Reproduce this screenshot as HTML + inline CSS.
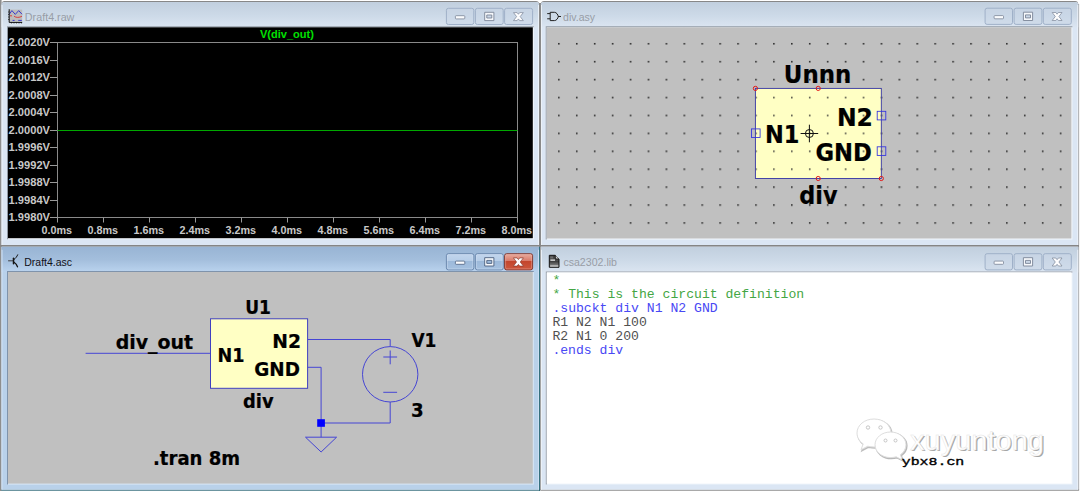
<!DOCTYPE html>
<html><head><meta charset="utf-8"><title>LTspice</title>
<style>
html,body{margin:0;padding:0;background:#fff;}
body{width:1080px;height:492px;overflow:hidden;}
svg{display:block;}
.ui{font-family:"Liberation Sans",sans-serif;}
.ab{font-family:"Liberation Sans",sans-serif;font-weight:bold;}
.tb{font-family:"DejaVu Sans Condensed","DejaVu Sans","Liberation Sans",sans-serif;font-weight:bold;fill:#000;}
.mono{font-family:"Liberation Mono",monospace;}
</style></head><body>
<svg width="1080" height="492" viewBox="0 0 1080 492">
<defs>
<linearGradient id="gi" x1="0" y1="0" x2="0" y2="1"><stop offset="0" stop-color="#c1cfde"/><stop offset="0.55" stop-color="#cddae8"/><stop offset="1" stop-color="#dbe5f1"/></linearGradient>
<linearGradient id="ga" x1="0" y1="0" x2="0" y2="1"><stop offset="0" stop-color="#98b4d4"/><stop offset="0.5" stop-color="#a3bedc"/><stop offset="1" stop-color="#bad3ee"/></linearGradient>
<linearGradient id="gdoc" x1="0" y1="0" x2="0" y2="1"><stop offset="0" stop-color="#3a3a3a"/><stop offset="0.4" stop-color="#555"/><stop offset="0.5" stop-color="#3c3c3c"/><stop offset="1" stop-color="#9c9c9c"/></linearGradient>
<linearGradient id="gred" x1="0" y1="0" x2="0" y2="1"><stop offset="0" stop-color="#e9ada0"/><stop offset="0.42" stop-color="#da7d6c"/><stop offset="0.46" stop-color="#c3452c"/><stop offset="1" stop-color="#cc583e"/></linearGradient>
<linearGradient id="gbtn" x1="0" y1="0" x2="0" y2="1"><stop offset="0" stop-color="#c2d6ed"/><stop offset="0.42" stop-color="#b7cee8"/><stop offset="0.46" stop-color="#9cb9da"/><stop offset="1" stop-color="#a6c1e0"/></linearGradient>
<pattern id="dots" x="558.05" y="42.95" width="17.92" height="17.92" patternUnits="userSpaceOnUse"><rect x="0" y="0" width="1.6" height="1.6" fill="#2c2c2c"/></pattern>
<clipPath id="c1"><rect x="8" y="27" width="524.8" height="211"/></clipPath>
</defs>
<rect x="0" y="0" width="1080" height="492" fill="#ffffff"/>
<rect x="0" y="0" width="1.6" height="491" fill="#8e8e8e"/>
<rect x="539" y="3" width="2" height="243" fill="#8a8a8a"/>
<rect x="1078.2" y="4" width="0.9" height="486" fill="#858585"/>
<rect x="539" y="246" width="1.1" height="245" fill="#35707f"/>
<rect x="540.1" y="246" width="0.9" height="244" fill="#9c9c9c"/>
<rect x="1.300" y="489.6" width="538.8" height="1.1" fill="#2e6878"/>
<rect x="540.400" y="489.6" width="538.7" height="1.1" fill="#858585"/>
<rect x="0" y="245" width="1079" height="1.8" fill="#858585"/>

<path d="M1.6 245V4a3 3 0 0 1 3 -3H536a3 3 0 0 1 3 3V245Z" fill="#878787"/>
<path d="M1.6 245V4.6a2.6 2.6 0 0 1 2.6 -2.6H536.4a2.6 2.6 0 0 1 2.600 2.6V245Z" fill="#dbe6f4"/>
<path d="M1.6 27.3V4.6a2.6 2.6 0 0 1 2.6 -2.6H536.4a2.6 2.6 0 0 1 2.600 2.600V27.3Z" fill="url(#gi)"/>
<rect x="1.6" y="5" width="0.9" height="240" fill="#eef3fa"/>
<rect x="538.1" y="5" width="0.9" height="240" fill="#eef3fa"/>
<rect x="7" y="26.3" width="526.8" height="212.89999999999998" fill="#f3f7fc"/>
<path d="M7 239.2V26.3H533.8V27.3H8V239.2Z" fill="#8f98a3"/>
<rect x="8" y="27.3" width="524.8" height="210.89999999999998" fill="#000000"/>
<rect x="446.4" y="8.3" width="27.399999999999977" height="16.2" rx="2" fill="#c9d6e6" fill-opacity="0.55" stroke="#9fb0c8" stroke-width="1"/>
<rect x="475.4" y="8.3" width="27.80000000000001" height="16.2" rx="2" fill="#c9d6e6" fill-opacity="0.55" stroke="#9fb0c8" stroke-width="1"/>
<rect x="504.59999999999997" y="8.3" width="28.000000000000057" height="16.2" rx="2" fill="#c9d6e6" fill-opacity="0.55" stroke="#9fb0c8" stroke-width="1"/>
<rect x="455.4" y="15.700000000000001" width="9.4" height="3.2" rx="0.8" fill="#fafbfd" stroke="#7a8496" stroke-width="0.8"/>
<path fill-rule="evenodd" d="M484.69999999999993 12.3h9.2v8.3h-9.200z M486.79999999999995 15.0h5v3h-5z" fill="#f6f8fb" stroke="#7a8496" stroke-width="0.9" stroke-linejoin="round"/>
<path d="M513.50 12.60L517.10 12.60L518.40 14.28L519.70 12.60L523.30 12.60L520.20 16.60L523.30 20.60L519.70 20.60L518.40 18.92L517.10 20.60L513.50 20.60L516.60 16.60Z" fill="#fdfdfe" stroke="#7a8496" stroke-width="0.7" stroke-linejoin="round"/>
<g><rect x="9.4" y="9.6" width="12.8" height="12" fill="#bcbcbc"/><path d="M9.3 14.2l2.6-3.6 3.4 3.8 3.4-3.8 3.3 3.6" fill="none" stroke="#3a3acc" stroke-width="1"/><path d="M10 15.8h2 M14 16.2c2 1.6 5.4 1.6 8 0" fill="none" stroke="#d94040" stroke-width="1"/><path d="M12.6 20.4h2 M18.2 20.4h3.6" stroke="#3a3acc" stroke-width="1"/><path d="M9.2 9.2v13.2h13" fill="none" stroke="#111" stroke-width="1"/><path d="M8.2 12h1 M8.2 14.5h1 M8.2 17h1 M8.2 19.500h1 M11.5 22.4v1 M14 22.4v1 M16.5 22.4v1 M19 22.400v1 M21.5 22.4v1" stroke="#111" stroke-width="0.8"/></g>
<text class="ui" x="24.88" y="20.8" font-size="10.2" fill="#989da6" textLength="49.51" lengthAdjust="spacingAndGlyphs">Draft4.raw</text>
<g clip-path="url(#c1)">
<rect x="57.5" y="42.5" width="460" height="175" fill="none" stroke="#8a8a8a" stroke-width="1"/>
<path d="M50 42.5H57.5" stroke="#9a9a9a" stroke-width="1"/>
<text class="ab" x="8.59" y="46.1" font-size="11.5" fill="#c8c8c8" textLength="41.41" lengthAdjust="spacingAndGlyphs">2.0020V</text>
<path d="M50 60.5H57.5" stroke="#9a9a9a" stroke-width="1"/>
<text class="ab" x="8.59" y="63.6" font-size="11.5" fill="#c8c8c8" textLength="41.41" lengthAdjust="spacingAndGlyphs">2.0016V</text>
<path d="M50 77.5H57.5" stroke="#9a9a9a" stroke-width="1"/>
<text class="ab" x="8.59" y="81.1" font-size="11.5" fill="#c8c8c8" textLength="41.41" lengthAdjust="spacingAndGlyphs">2.0012V</text>
<path d="M50 95.5H57.5" stroke="#9a9a9a" stroke-width="1"/>
<text class="ab" x="8.59" y="98.6" font-size="11.5" fill="#c8c8c8" textLength="41.41" lengthAdjust="spacingAndGlyphs">2.0008V</text>
<path d="M50 112.5H57.5" stroke="#9a9a9a" stroke-width="1"/>
<text class="ab" x="8.59" y="116.1" font-size="11.5" fill="#c8c8c8" textLength="41.41" lengthAdjust="spacingAndGlyphs">2.0004V</text>
<path d="M50 130.5H57.5" stroke="#9a9a9a" stroke-width="1"/>
<text class="ab" x="8.59" y="133.6" font-size="11.5" fill="#c8c8c8" textLength="41.41" lengthAdjust="spacingAndGlyphs">2.0000V</text>
<path d="M50 147.5H57.5" stroke="#9a9a9a" stroke-width="1"/>
<text class="ab" x="8.60" y="151.1" font-size="11.5" fill="#c8c8c8" textLength="41.40" lengthAdjust="spacingAndGlyphs">1.9996V</text>
<path d="M50 165.5H57.5" stroke="#9a9a9a" stroke-width="1"/>
<text class="ab" x="8.60" y="168.6" font-size="11.5" fill="#c8c8c8" textLength="41.40" lengthAdjust="spacingAndGlyphs">1.9992V</text>
<path d="M50 182.5H57.5" stroke="#9a9a9a" stroke-width="1"/>
<text class="ab" x="8.60" y="186.1" font-size="11.5" fill="#c8c8c8" textLength="41.40" lengthAdjust="spacingAndGlyphs">1.9988V</text>
<path d="M50 200.5H57.5" stroke="#9a9a9a" stroke-width="1"/>
<text class="ab" x="8.60" y="203.6" font-size="11.5" fill="#c8c8c8" textLength="41.40" lengthAdjust="spacingAndGlyphs">1.9984V</text>
<path d="M50 217.5H57.5" stroke="#9a9a9a" stroke-width="1"/>
<text class="ab" x="8.60" y="221.1" font-size="11.5" fill="#c8c8c8" textLength="41.40" lengthAdjust="spacingAndGlyphs">1.9980V</text>
<path d="M57.5 217.5V222.5" stroke="#9a9a9a" stroke-width="1"/>
<text class="ab" x="41.39" y="234.4" font-size="11.5" fill="#c8c8c8" textLength="30.61" lengthAdjust="spacingAndGlyphs">0.0ms</text>
<path d="M103.5 217.5V222.5" stroke="#9a9a9a" stroke-width="1"/>
<text class="ab" x="87.39" y="234.4" font-size="11.5" fill="#c8c8c8" textLength="30.61" lengthAdjust="spacingAndGlyphs">0.8ms</text>
<path d="M149.5 217.5V222.5" stroke="#9a9a9a" stroke-width="1"/>
<text class="ab" x="133.38" y="234.4" font-size="11.5" fill="#c8c8c8" textLength="30.62" lengthAdjust="spacingAndGlyphs">1.6ms</text>
<path d="M195.5 217.5V222.5" stroke="#9a9a9a" stroke-width="1"/>
<text class="ab" x="179.39" y="234.4" font-size="11.5" fill="#c8c8c8" textLength="30.61" lengthAdjust="spacingAndGlyphs">2.4ms</text>
<path d="M241.5 217.5V222.5" stroke="#9a9a9a" stroke-width="1"/>
<text class="ab" x="225.39" y="234.4" font-size="11.5" fill="#c8c8c8" textLength="30.61" lengthAdjust="spacingAndGlyphs">3.2ms</text>
<path d="M287.5 217.5V222.5" stroke="#9a9a9a" stroke-width="1"/>
<text class="ab" x="271.39" y="234.4" font-size="11.5" fill="#c8c8c8" textLength="30.61" lengthAdjust="spacingAndGlyphs">4.0ms</text>
<path d="M333.5 217.5V222.5" stroke="#9a9a9a" stroke-width="1"/>
<text class="ab" x="317.39" y="234.4" font-size="11.5" fill="#c8c8c8" textLength="30.61" lengthAdjust="spacingAndGlyphs">4.8ms</text>
<path d="M379.5 217.5V222.5" stroke="#9a9a9a" stroke-width="1"/>
<text class="ab" x="363.39" y="234.4" font-size="11.5" fill="#c8c8c8" textLength="30.61" lengthAdjust="spacingAndGlyphs">5.6ms</text>
<path d="M425.5 217.5V222.5" stroke="#9a9a9a" stroke-width="1"/>
<text class="ab" x="409.39" y="234.4" font-size="11.5" fill="#c8c8c8" textLength="30.61" lengthAdjust="spacingAndGlyphs">6.4ms</text>
<path d="M471.5 217.5V222.5" stroke="#9a9a9a" stroke-width="1"/>
<text class="ab" x="455.38" y="234.4" font-size="11.5" fill="#c8c8c8" textLength="30.62" lengthAdjust="spacingAndGlyphs">7.2ms</text>
<path d="M517.5 217.5V222.5" stroke="#9a9a9a" stroke-width="1"/>
<text class="ab" x="501.39" y="234.4" font-size="11.5" fill="#c8c8c8" textLength="30.61" lengthAdjust="spacingAndGlyphs">8.0ms</text>
<path d="M57.5 130.5H517.5" stroke="#00a800" stroke-width="1"/>
<text class="ab" x="259.88" y="38" font-size="11.3" fill="#00e000" textLength="54.04" lengthAdjust="spacingAndGlyphs">V(div_out)</text>
</g>
<path d="M541 245V4a3 3 0 0 1 3 -3H1075.2a3 3 0 0 1 3 3V245Z" fill="#878787"/>
<path d="M541 245V4.6a2.6 2.6 0 0 1 2.6 -2.6H1075.6000000000001a2.6 2.6 0 0 1 2.600 2.6V245Z" fill="#dbe6f4"/>
<path d="M541 27.3V4.6a2.6 2.6 0 0 1 2.6 -2.6H1075.6000000000001a2.6 2.6 0 0 1 2.600 2.600V27.3Z" fill="url(#gi)"/>
<rect x="541" y="5" width="0.9" height="240" fill="#eef3fa"/>
<rect x="1077.3" y="5" width="0.9" height="240" fill="#eef3fa"/>
<rect x="545.7" y="26.3" width="526.7" height="213.2" fill="#f3f7fc"/>
<path d="M545.7 239.5V26.3H1072.4V27.3H546.7V239.5Z" fill="#8f98a3"/>
<rect x="546.7" y="27.3" width="524.7" height="211.2" fill="#c0c0c0"/>
<rect x="985.1" y="8.2" width="27.399999999999977" height="16.2" rx="2" fill="#c9d6e6" fill-opacity="0.55" stroke="#9fb0c8" stroke-width="1"/>
<rect x="1014.1" y="8.2" width="27.800000000000068" height="16.2" rx="2" fill="#c9d6e6" fill-opacity="0.55" stroke="#9fb0c8" stroke-width="1"/>
<rect x="1043.3" y="8.2" width="28.0" height="16.2" rx="2" fill="#c9d6e6" fill-opacity="0.55" stroke="#9fb0c8" stroke-width="1"/>
<rect x="994.0999999999999" y="15.6" width="9.4" height="3.2" rx="0.8" fill="#fafbfd" stroke="#7a8496" stroke-width="0.8"/>
<path fill-rule="evenodd" d="M1023.4 12.2h9.2v8.3h-9.200z M1025.5 14.899999999999999h5v3h-5z" fill="#f6f8fb" stroke="#7a8496" stroke-width="0.9" stroke-linejoin="round"/>
<path d="M1052.20 12.50L1055.80 12.50L1057.10 14.18L1058.40 12.50L1062.00 12.50L1058.90 16.50L1062.00 20.50L1058.40 20.50L1057.10 18.82L1055.80 20.50L1052.20 20.50L1055.30 16.50Z" fill="#fdfdfe" stroke="#7a8496" stroke-width="0.7" stroke-linejoin="round"/>
<rect x="546.7" y="27.3" width="524.7" height="211.2" fill="url(#dots)"/>
<g fill="none" stroke="#222" stroke-width="1"><path d="M547.200 13.6H550.2 M547.2 18.8H550.2 M558 16.5H561"/><path d="M550.2 12.300H554.4C556.6 12.3 558 14.800 558.3 16.500C558 18.300 556.600 20.600 554.400 20.600H550.200Z"/></g>
<text class="ui" x="563.09" y="20.8" font-size="10.2" fill="#989da6" textLength="31.91" lengthAdjust="spacingAndGlyphs">div.asy</text>
<rect x="755.4" y="88.4" width="125.9" height="90.1" fill="#ffffc4" stroke="#3434a4" stroke-width="0.9"/>
<rect x="756" y="89" width="124.8" height="89" fill="url(#dots)" opacity="0.85"/>
<circle cx="755.4" cy="88.4" r="2.1" fill="none" stroke="#e41818" stroke-width="1"/>
<circle cx="818.2" cy="88.4" r="2.1" fill="none" stroke="#e41818" stroke-width="1"/>
<circle cx="818.2" cy="178.5" r="2.1" fill="none" stroke="#e41818" stroke-width="1"/>
<circle cx="881.3" cy="178.5" r="2.1" fill="none" stroke="#e41818" stroke-width="1"/>
<rect x="751.5" y="128.89999999999998" width="8.6" height="8.6" fill="none" stroke="#3030e0" stroke-width="0.85"/>
<rect x="877.2" y="111.3" width="8.6" height="8.6" fill="none" stroke="#3030e0" stroke-width="0.85"/>
<rect x="877.2" y="146.79999999999998" width="8.6" height="8.6" fill="none" stroke="#3030e0" stroke-width="0.85"/>
<g fill="none" stroke="#111" stroke-width="1"><circle cx="809.4" cy="133.5" r="4"/><path d="M800.6 133.5H818.2 M809.4 124.7V142.3"/></g>
<text class="tb" x="783.84" y="83.2" font-size="25.2" stroke="#000" stroke-width="0.2" textLength="67.50" lengthAdjust="spacingAndGlyphs">Unnn</text>
<text class="tb" x="764.94" y="143.4" font-size="25.2" stroke="#000" stroke-width="0.2" textLength="34.39" lengthAdjust="spacingAndGlyphs">N1</text>
<text class="tb" x="836.94" y="125.8" font-size="25.2" stroke="#000" stroke-width="0.2" textLength="36.04" lengthAdjust="spacingAndGlyphs">N2</text>
<text class="tb" x="815.49" y="161.3" font-size="25.2" stroke="#000" stroke-width="0.2" textLength="56.42" lengthAdjust="spacingAndGlyphs">GND</text>
<text class="tb" x="799.30" y="204.0" font-size="25.2" stroke="#000" stroke-width="0.2" textLength="38.22" lengthAdjust="spacingAndGlyphs">div</text>
<rect x="1.6" y="246.8" width="537.4" height="242.8" fill="#b9d1ea"/>
<rect x="1.6" y="246.8" width="537.4" height="25.19999999999999" fill="url(#ga)"/>
<rect x="1.6" y="249.8" width="0.9" height="239.8" fill="#cfe1f5"/>
<rect x="538.1" y="249.8" width="0.9" height="239.8" fill="#cfe1f5"/>
<rect x="7" y="271" width="526.8" height="213.60000000000002" fill="#d9e7f6"/>
<path d="M7 484.6V271H533.8V272H8V484.6Z" fill="#7f93ab"/>
<rect x="8" y="272" width="524.8" height="211.60000000000002" fill="#c0c0c0"/>
<rect x="446.4" y="253.7" width="27.399999999999977" height="16.2" rx="2" fill="url(#gbtn)" stroke="#6482a8" stroke-width="0.9"/>
<rect x="447.4" y="254.7" width="25.399999999999977" height="14.2" rx="1.3" fill="none" stroke="#d2e2f4" stroke-opacity="0.6" stroke-width="0.8"/>
<rect x="475.4" y="253.7" width="27.80000000000001" height="16.2" rx="2" fill="url(#gbtn)" stroke="#6482a8" stroke-width="0.9"/>
<rect x="476.4" y="254.7" width="25.80000000000001" height="14.2" rx="1.3" fill="none" stroke="#d2e2f4" stroke-opacity="0.6" stroke-width="0.8"/>
<rect x="504.59999999999997" y="253.7" width="28.000000000000057" height="16.2" rx="2" fill="url(#gred)" stroke="#7a2f26" stroke-width="0.9"/>
<rect x="505.59999999999997" y="254.7" width="26.000000000000057" height="14.2" rx="1.3" fill="none" stroke="#f0b8ae" stroke-opacity="0.55" stroke-width="0.8"/>
<rect x="455.4" y="261.09999999999997" width="9.4" height="3.2" rx="0.8" fill="#fafbfd" stroke="#4b5f7e" stroke-width="0.8"/>
<path fill-rule="evenodd" d="M484.69999999999993 257.7h9.2v8.3h-9.200z M486.79999999999995 260.4h5v3h-5z" fill="#f6f8fb" stroke="#4b5f7e" stroke-width="0.9" stroke-linejoin="round"/>
<path d="M513.40 257.90L517.10 257.90L518.40 259.59L519.70 257.90L523.40 257.90L520.25 262.00L523.40 266.10L519.70 266.10L518.40 264.41L517.10 266.10L513.40 266.10L516.55 262.00Z" fill="#fdfdfe" stroke="#8a3a2c" stroke-width="0.7" stroke-linejoin="round"/>
<g fill="none" stroke="#151515" stroke-linecap="round"><path d="M8.5 260.8H13" stroke-width="0.9" stroke="#333"/><path d="M13.5 258.3V263.8" stroke-width="1.5"/><path d="M14 259.6C15.600 258.200 17 256.600 17.700 254.800" stroke-width="1"/><path d="M14 262.300C15.600 263.400 16.800 264.800 17.500 266.800" stroke-width="1.3"/></g>
<text class="ui" x="24.25" y="265.5" font-size="10.2" fill="#101018" textLength="47.75" lengthAdjust="spacingAndGlyphs">Draft4.asc</text>
<g fill="none" stroke="#4545d4" stroke-width="1">
<path d="M85.6 353.3H210.6"/>
<path d="M307.6 339.5H390.2V346.600"/>
<path d="M307.600 367.3H321.1V437.2"/>
<path d="M390.200 402V423H321.100"/>
<path d="M305.500 437.2H336.6L321.1 452Z"/>
<circle cx="390.2" cy="374.3" r="27.700"/>
<path d="M383.3 357H397.100 M390.200 350.500V364.300 M383.300 392.300H397.100"/>
</g>
<rect x="210.5" y="318.8" width="97.1" height="69.500" fill="#ffffc4" stroke="#4040c0" stroke-width="1"/>
<rect x="317.2" y="419.200" width="7.700" height="7.600" fill="#0000ff"/>
<text class="tb" x="245.25" y="314.2" font-size="19.4" stroke="#000" stroke-width="0.2" textLength="25.74" lengthAdjust="spacingAndGlyphs">U1</text>
<text class="tb" x="115.70" y="349.3" font-size="19.4" stroke="#000" stroke-width="0.2" textLength="77.51" lengthAdjust="spacingAndGlyphs">div_out</text>
<text class="tb" x="217.44" y="361.7" font-size="19.4" stroke="#000" stroke-width="0.2" textLength="27.01" lengthAdjust="spacingAndGlyphs">N1</text>
<text class="tb" x="272.32" y="347.7" font-size="19.4" stroke="#000" stroke-width="0.2" textLength="28.75" lengthAdjust="spacingAndGlyphs">N2</text>
<text class="tb" x="254.30" y="375.5" font-size="19.4" stroke="#000" stroke-width="0.2" textLength="45.70" lengthAdjust="spacingAndGlyphs">GND</text>
<text class="tb" x="243.00" y="407.7" font-size="19.4" stroke="#000" stroke-width="0.2" textLength="30.61" lengthAdjust="spacingAndGlyphs">div</text>
<text class="tb" x="411.40" y="347.3" font-size="19.4" stroke="#000" stroke-width="0.2" textLength="25.00" lengthAdjust="spacingAndGlyphs">V1</text>
<text class="tb" x="411.08" y="416.5" font-size="19.4" stroke="#000" stroke-width="0.2" textLength="12.69" lengthAdjust="spacingAndGlyphs">3</text>
<text class="tb" x="152.99" y="465.2" font-size="19.4" stroke="#000" stroke-width="0.2" textLength="87.15" lengthAdjust="spacingAndGlyphs">.tran 8m</text>
<rect x="541" y="246.8" width="537.2" height="242.8" fill="#dbe6f4"/>
<rect x="541" y="246.8" width="537.2" height="25.599999999999966" fill="url(#gi)"/>
<rect x="541" y="249.8" width="0.9" height="239.8" fill="#eef3fa"/>
<rect x="1077.3" y="249.8" width="0.9" height="239.8" fill="#eef3fa"/>
<rect x="545.8" y="271.4" width="526.6000000000001" height="213.0" fill="#f3f7fc"/>
<path d="M545.8 484.4V271.4H1072.4V272.4H546.8V484.4Z" fill="#8f98a3"/>
<rect x="546.8" y="272.4" width="524.6000000000001" height="211.0" fill="#ffffff"/>
<rect x="985.1" y="253.7" width="27.399999999999977" height="16.2" rx="2" fill="#c9d6e6" fill-opacity="0.55" stroke="#9fb0c8" stroke-width="1"/>
<rect x="1014.1" y="253.7" width="27.800000000000068" height="16.2" rx="2" fill="#c9d6e6" fill-opacity="0.55" stroke="#9fb0c8" stroke-width="1"/>
<rect x="1043.3" y="253.7" width="28.0" height="16.2" rx="2" fill="#c9d6e6" fill-opacity="0.55" stroke="#9fb0c8" stroke-width="1"/>
<rect x="994.0999999999999" y="261.09999999999997" width="9.4" height="3.2" rx="0.8" fill="#fafbfd" stroke="#7a8496" stroke-width="0.8"/>
<path fill-rule="evenodd" d="M1023.4 257.7h9.2v8.3h-9.200z M1025.5 260.4h5v3h-5z" fill="#f6f8fb" stroke="#7a8496" stroke-width="0.9" stroke-linejoin="round"/>
<path d="M1052.20 258.00L1055.80 258.00L1057.10 259.68L1058.40 258.00L1062.00 258.00L1058.90 262.00L1062.00 266.00L1058.40 266.00L1057.10 264.32L1055.80 266.00L1052.20 266.00L1055.30 262.00Z" fill="#fdfdfe" stroke="#7a8496" stroke-width="0.7" stroke-linejoin="round"/>
<g><path d="M549.3 255.300H555.300L559 259V267.300H549.300Z" fill="url(#gdoc)" stroke="#151515" stroke-width="1"/><path d="M555.3 255.3V259H559" fill="#cfcfcf" stroke="#151515" stroke-width="0.9"/><path d="M550.4 259.500h4.600v1.300h-4.600z" fill="#e6e6e6"/><path d="M550.2 256.400h2.800v2h-2.800z" fill="#6a6a6a"/><path d="M550.200 265.300h8v1.300h-8z" fill="#c4c4c4"/></g>
<text class="ui" x="563.40" y="265.5" font-size="10.2" fill="#989da6" textLength="53.60" lengthAdjust="spacingAndGlyphs">csa2302.lib</text>
<text class="mono" x="552.4" y="283.80" font-size="12" fill="#44a644" xml:space="preserve" textLength="7.9" lengthAdjust="spacingAndGlyphs">*</text>
<text class="mono" x="552.4" y="297.85" font-size="12" fill="#44a644" xml:space="preserve" textLength="251.8" lengthAdjust="spacingAndGlyphs">* This is the circuit definition</text>
<text class="mono" x="552.4" y="311.90" font-size="12" fill="#4848f4" xml:space="preserve" textLength="165.3" lengthAdjust="spacingAndGlyphs">.subckt div N1 N2 GND</text>
<text class="mono" x="552.4" y="325.95" font-size="12" fill="#505050" xml:space="preserve" textLength="94.4" lengthAdjust="spacingAndGlyphs">R1 N2 N1 100</text>
<text class="mono" x="552.4" y="340.00" font-size="12" fill="#505050" xml:space="preserve" textLength="86.6" lengthAdjust="spacingAndGlyphs">R2 N1 0 200</text>
<text class="mono" x="552.4" y="354.05" font-size="12" fill="#4848f4" xml:space="preserve" textLength="70.8" lengthAdjust="spacingAndGlyphs">.ends div</text>
<g id="wm">
<path d="M874 419c-9.500 0-17 6.200-17 14 0 4.400 2.400 8.300 6.200 10.900l-2.200 5.800 6.800-3.500c1.900 0.500 4 0.800 6.200 0.800 9.500 0 17-6.200 17-14s-7.500-14-17-14z" transform="translate(0.9,1)" fill="#d0d0d0" stroke="#bdbdbd" stroke-width="1.4"/>
<path d="M874 419c-9.500 0-17 6.200-17 14 0 4.400 2.400 8.300 6.200 10.900l-2.200 5.800 6.800-3.500c1.900 0.500 4 0.800 6.200 0.800 9.500 0 17-6.200 17-14s-7.500-14-17-14z" fill="#ffffff" stroke="#dedede" stroke-width="1"/>
<path d="M890.500 432c8.600 0 15.500 5.700 15.500 12.800 0 4-2.200 7.500-5.600 9.900l1.800 5.200-6-3.100c-1.800 0.500-3.700 0.800-5.700 0.800-8.600 0-15.500-5.700-15.500-12.800s6.900-12.800 15.500-12.800z" transform="translate(0.9,1)" fill="#d0d0d0" stroke="#b8b8b8" stroke-width="1.4"/>
<path d="M890.500 432c8.600 0 15.500 5.700 15.500 12.800 0 4-2.200 7.500-5.600 9.900l1.800 5.200-6-3.100c-1.800 0.500-3.700 0.800-5.700 0.800-8.600 0-15.500-5.700-15.500-12.800s6.900-12.800 15.500-12.800z" fill="#ffffff" stroke="#dedede" stroke-width="1"/>
<g fill="#fff" stroke="#c0c0c0" stroke-width="0.9"><circle cx="868" cy="427.500" r="1.700"/><circle cx="880.5" cy="427.500" r="1.700"/><circle cx="885.5" cy="440.500" r="1.500"/><circle cx="895.5" cy="440.500" r="1.500"/></g>
<text class="ui" x="911.3" y="451.200" font-size="28" fill="#a6a6a6" textLength="134" lengthAdjust="spacingAndGlyphs">xuyuntong</text>
<text class="ui" x="910" y="449.800" font-size="28" fill="#ffffff" stroke="#e4e4e4" stroke-width="0.4" textLength="134" lengthAdjust="spacingAndGlyphs">xuyuntong</text>
<text x="901.700" y="465.4" font-family="'Liberation Mono',monospace" font-size="11.5" fill="#000" stroke="#000" stroke-width="0.35" textLength="62.6" lengthAdjust="spacingAndGlyphs">ybx8.cn</text>
</g>
</svg></body></html>
